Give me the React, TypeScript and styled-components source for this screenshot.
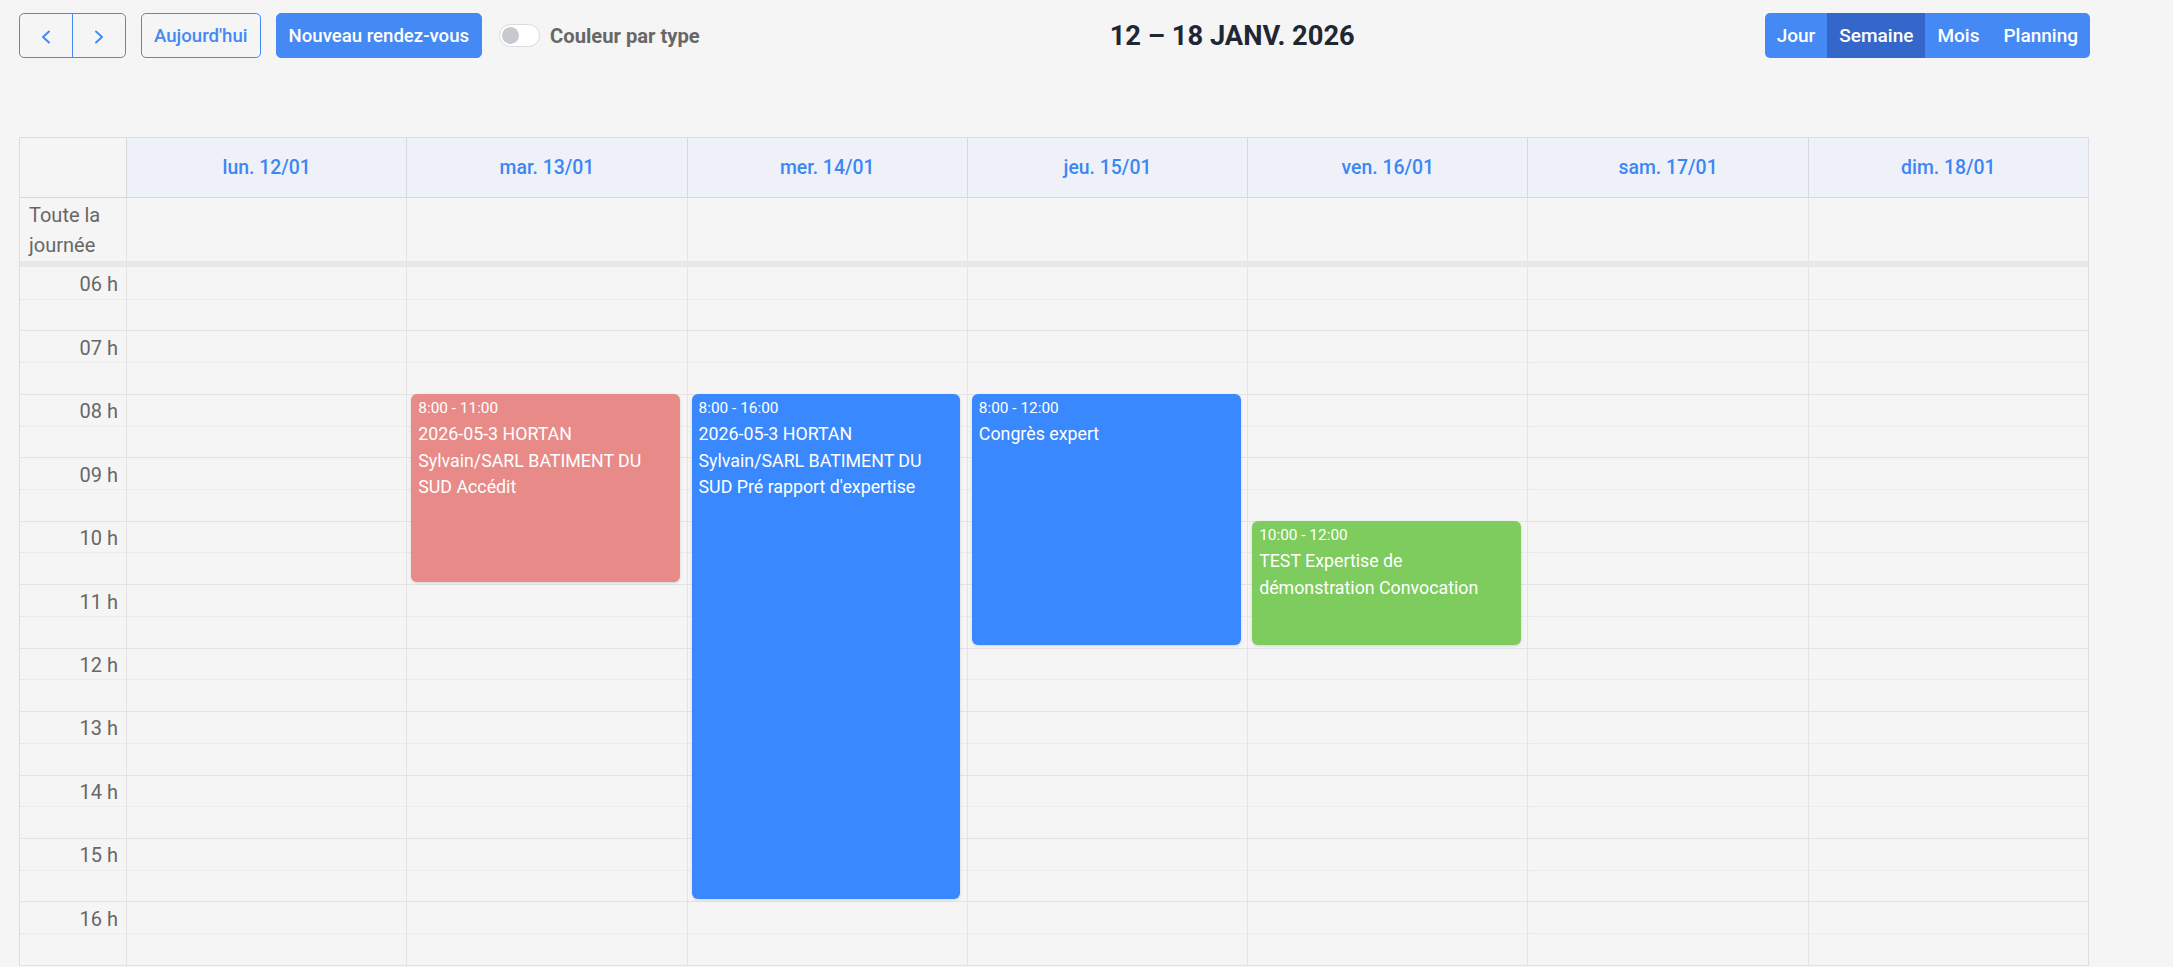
import React from 'react';
import styled, { createGlobalStyle } from 'styled-components';

const GlobalStyle = createGlobalStyle`
  html, body {
    margin: 0;
    padding: 0;
    background: #f5f5f5;
    overflow: hidden;
  }
  body {
    font-family: Roboto, "Noto Sans", "Liberation Sans", sans-serif;
  }
  * {
    box-sizing: border-box;
  }
`;

const HOUR_HEIGHT = 63.46;
const FIRST_HOUR = 6;
const LAST_HOUR = 16;

const BLUE = '#4589f5';

const Page = styled.div`
  padding: 13px 0 0 19px;
`;

const Toolbar = styled.div`
  display: flex;
  justify-content: space-between;
  align-items: center;
  width: 2071px;
  height: 45px;
`;

const Chunk = styled.div`
  display: flex;
  align-items: center;
`;

const NavGroup = styled.div`
  display: flex;
`;

const NavButton = styled.button<{ $side: 'left' | 'right' }>`
  width: 54px;
  height: 45px;
  padding: 3px 0 0;
  display: flex;
  align-items: center;
  justify-content: center;
  background: transparent;
  border: 1px solid ${BLUE};
  color: ${BLUE};
  cursor: pointer;
  border-radius: ${(p) => (p.$side === 'left' ? '5px 0 0 5px' : '0 5px 5px 0')};
  margin-left: ${(p) => (p.$side === 'right' ? '-1px' : '0')};
`;

const TextButton = styled.button<{ $filled?: boolean }>`
  margin-left: 15px;
  height: 45px;
  padding: 0 12px;
  border: 1px solid ${BLUE};
  border-radius: 5px;
  background: ${(p) => (p.$filled ? BLUE : 'transparent')};
  color: ${(p) => (p.$filled ? '#fff' : BLUE)};
  font-family: Roboto, sans-serif;
  font-size: 18.6px;
  font-weight: 500;
  cursor: pointer;
`;

const SwitchTrack = styled.span`
  margin-left: 17px;
  width: 41px;
  height: 23px;
  border-radius: 12px;
  border: 1px solid #dadbdd;
  background: #fff;
  display: flex;
  align-items: center;
  padding-left: 2px;
`;

const SwitchKnob = styled.span`
  width: 17px;
  height: 17px;
  border-radius: 50%;
  background: #c6c9ce;
`;

const SwitchLabel = styled.span`
  margin-left: 10px;
  font-size: 20.2px;
  font-weight: 700;
  color: #676767;
`;

const Title = styled.h2`
  margin: 0;
  font-size: 27.3px;
  font-weight: 700;
  color: #1f2734;
`;

const ViewGroup = styled.div`
  display: flex;
  border-radius: 5px;
  overflow: hidden;
`;

const ViewButton = styled.button<{ $active?: boolean }>`
  height: 45px;
  padding: 0 12px;
  border: none;
  background: ${(p) => (p.$active ? '#3467c9' : BLUE)};
  color: #fff;
  font-family: Roboto, sans-serif;
  font-size: 19px;
  font-weight: 500;
  cursor: pointer;
`;

const Calendar = styled.div`
  margin-top: 79px;
  width: 2070px;
  border: 1px solid #dcdde0;
  border-bottom-color: #e3e3e6;
`;

const Row = styled.div<{ $height: number }>`
  display: grid;
  grid-template-columns: 106px repeat(7, 1fr);
  height: ${(p) => p.$height}px;
`;

const HeaderRow = styled(Row)`
  border-bottom: 1px solid #d5d8dd;
`;

const HeaderCell = styled.div`
  border-left: 1px solid #d5d8dd;
  background: #eef2f8;
  display: flex;
  align-items: center;
  justify-content: center;
  color: #3d86f5;
  font-size: 19.4px;
  font-weight: 500;
`;

const AllDayLabel = styled.div`
  padding: 2px 9px 0;
  font-size: 20px;
  line-height: 30px;
  color: #676767;
`;

const Cell = styled.div`
  border-left: 1px solid #e4e4e7;
`;

const Divider = styled.div`
  height: 6px;
  background: #e8e8e9;
`;

const Body = styled.div`
  display: grid;
  grid-template-columns: 106px repeat(7, 1fr);
`;

const DayCol = styled.div`
  position: relative;
  border-left: 1px solid #e4e4e7;
`;

const Slot = styled.div<{ $line: 'none' | 'solid' | 'dotted' }>`
  height: ${HOUR_HEIGHT / 2}px;
  border-top: ${(p) => (p.$line === 'none' ? '0' : `1px ${p.$line} #e3e3e6`)};
`;

const LabelSlot = styled(Slot)`
  display: flex;
  align-items: center;
  justify-content: flex-end;
  padding: 2px 8px 0 0;
  font-size: 20px;
  color: #676767;
`;

const Event = styled.div<{ $color: string }>`
  position: absolute;
  left: 4px;
  right: 6.5px;
  padding: 3px 7px;
  border-radius: 6px;
  background: ${(p) => p.$color};
  color: #fff;
  box-shadow: 0 1px 3px rgba(0, 0, 0, 0.14);
  overflow: hidden;
`;

const EventTime = styled.div`
  font-size: 15.4px;
  line-height: 22px;
`;

const EventTitle = styled.div`
  padding-top: 2px;
  font-size: 17.8px;
  line-height: 26.7px;
`;

const ChevronIcon = ({ dir }: { dir: 'left' | 'right' }) => (
  <svg width="12" height="14" viewBox="0 0 12 14" fill="none">
    <polyline
      points={dir === 'left' ? '9,1.5 3,7 9,12.5' : '3,1.5 9,7 3,12.5'}
      stroke="currentColor"
      strokeWidth="2"
      strokeLinecap="round"
      strokeLinejoin="round"
    />
  </svg>
);

const days = [
  'lun. 12/01',
  'mar. 13/01',
  'mer. 14/01',
  'jeu. 15/01',
  'ven. 16/01',
  'sam. 17/01',
  'dim. 18/01',
];

type CalEvent = {
  day: number;
  start: number;
  end: number;
  time: string;
  title: string;
  color: string;
};

const events: CalEvent[] = [
  {
    day: 1,
    start: 8,
    end: 11,
    time: '8:00 - 11:00',
    title: '2026-05-3 HORTAN Sylvain/SARL BATIMENT DU SUD Accédit',
    color: '#e88a88',
  },
  {
    day: 2,
    start: 8,
    end: 16,
    time: '8:00 - 16:00',
    title: "2026-05-3 HORTAN Sylvain/SARL BATIMENT DU SUD Pré rapport d'expertise",
    color: '#3a88fe',
  },
  {
    day: 3,
    start: 8,
    end: 12,
    time: '8:00 - 12:00',
    title: 'Congrès expert',
    color: '#3a88fe',
  },
  {
    day: 4,
    start: 10,
    end: 12,
    time: '10:00 - 12:00',
    title: 'TEST Expertise de démonstration Convocation',
    color: '#7ecb5e',
  },
];

const slotCount = (LAST_HOUR - FIRST_HOUR + 1) * 2;
const slotLine = (i: number) => (i === 0 ? 'none' : i % 2 === 0 ? 'solid' : 'dotted');

export default function App() {
  return (
    <Page>
      <GlobalStyle />
      <Toolbar>
        <Chunk>
          <NavGroup>
            <NavButton $side="left" aria-label="Précédent">
              <ChevronIcon dir="left" />
            </NavButton>
            <NavButton $side="right" aria-label="Suivant">
              <ChevronIcon dir="right" />
            </NavButton>
          </NavGroup>
          <TextButton>Aujourd'hui</TextButton>
          <TextButton $filled>Nouveau rendez-vous</TextButton>
          <SwitchTrack>
            <SwitchKnob />
          </SwitchTrack>
          <SwitchLabel>Couleur par type</SwitchLabel>
        </Chunk>
        <Title>12 – 18 JANV. 2026</Title>
        <ViewGroup>
          <ViewButton>Jour</ViewButton>
          <ViewButton $active>Semaine</ViewButton>
          <ViewButton>Mois</ViewButton>
          <ViewButton>Planning</ViewButton>
        </ViewGroup>
      </Toolbar>

      <Calendar>
        <HeaderRow $height={60}>
          <div />
          {days.map((d) => (
            <HeaderCell key={d}>{d}</HeaderCell>
          ))}
        </HeaderRow>
        <Row $height={63}>
          <AllDayLabel>Toute la journée</AllDayLabel>
          {days.map((d) => (
            <Cell key={d} />
          ))}
        </Row>
        <Divider />
        <Body>
          <div>
            {Array.from({ length: slotCount }, (_, i) => (
              <LabelSlot key={i} $line={slotLine(i)}>
                {i % 2 === 0 ? `${String(FIRST_HOUR + i / 2).padStart(2, '0')} h` : ''}
              </LabelSlot>
            ))}
          </div>
          {days.map((d, dayIndex) => (
            <DayCol key={d}>
              {Array.from({ length: slotCount }, (_, i) => (
                <Slot key={i} $line={slotLine(i)} />
              ))}
              {events
                .filter((e) => e.day === dayIndex)
                .map((e) => (
                  <Event
                    key={e.title}
                    $color={e.color}
                    style={{
                      top: (e.start - FIRST_HOUR) * HOUR_HEIGHT,
                      height: (e.end - e.start) * HOUR_HEIGHT - 2.5,
                    }}
                  >
                    <EventTime>{e.time}</EventTime>
                    <EventTitle>{e.title}</EventTitle>
                  </Event>
                ))}
            </DayCol>
          ))}
        </Body>
      </Calendar>
    </Page>
  );
}
